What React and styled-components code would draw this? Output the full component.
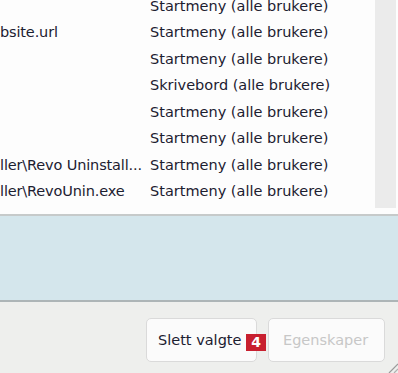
import React from "react";
import styled, { createGlobalStyle } from "styled-components";

const Global = createGlobalStyle`
  html, body { margin: 0; padding: 0; background: #fdfdfd; }
  body { font-family: "DejaVu Sans", Verdana, sans-serif; }
`;

const Window = styled.div`
  position: relative;
  width: 398px;
  height: 373px;
  display: flex;
  flex-direction: column;
  overflow: hidden;
  font-family: "DejaVu Sans", Verdana, sans-serif;
`;

const ListArea = styled.div`
  height: 214px;
  display: flex;
  background: #fdfdfd;
  border-bottom: 2px solid #c6caca;
  flex-shrink: 0;
`;

const Viewport = styled.div`
  flex: 1;
  overflow: hidden;
`;

const Rows = styled.div`
  margin-top: -7.4px;
`;

const Row = styled.div`
  display: grid;
  grid-template-columns: 150px 1fr;
  height: 26.5px;
  line-height: 26.5px;
  font-size: 14.5px;
  color: #1c2030;
  white-space: nowrap;
`;

const Cell = styled.div`
  overflow: hidden;
  letter-spacing: ${(p) => (p.$tight ? "-0.15px" : "0")};
`;

const Scrollbar = styled.div`
  width: 21px;
  height: 208px;
  margin-right: 2px;
  background: #ebebeb;
  flex-shrink: 0;
`;

const InfoArea = styled.div`
  height: 84px;
  background: #d4e6ec;
  border-bottom: 2px solid #adb5b7;
  flex-shrink: 0;
`;

const ButtonBar = styled.div`
  flex: 1;
  background: #eeefed;
  display: flex;
  justify-content: flex-end;
  align-items: flex-start;
  gap: 11px;
  padding: 16px 13px 0 0;
`;

const Button = styled.button`
  position: relative;
  width: ${(p) => p.$w}px;
  height: 44px;
  border: 1px solid #dadada;
  border-radius: 5px;
  background: #fbfbfb;
  font-family: "DejaVu Sans", Verdana, sans-serif;
  font-size: 14.5px;
  color: ${(p) => (p.disabled ? "#c7c7c7" : "#1c2030")};
  padding: 0 0 0 ${(p) => p.$pl}px;
  text-align: left;
  cursor: default;
`;

const Badge = styled.span`
  position: absolute;
  left: 99px;
  top: 15px;
  width: 20px;
  height: 17px;
  background: #c8202f;
  color: #fff;
  font-weight: bold;
  font-size: 14px;
  line-height: 17px;
  text-align: center;
`;

const Grip = styled.svg`
  position: absolute;
  right: 0;
  bottom: 0;
`;

const rows = [
  ["", "Startmeny (alle brukere)"],
  ["bsite.url", "Startmeny (alle brukere)"],
  ["", "Startmeny (alle brukere)"],
  ["", "Skrivebord (alle brukere)"],
  ["", "Startmeny (alle brukere)"],
  ["", "Startmeny (alle brukere)"],
  ["ller\\Revo Uninstall...", "Startmeny (alle brukere)"],
  ["ller\\RevoUnin.exe", "Startmeny (alle brukere)"],
];

export default function App() {
  return (
    <Window>
      <Global />
      <ListArea>
        <Viewport>
          <Rows>
            {rows.map(([a, b], i) => (
              <Row key={i}>
                <Cell $tight>{a}</Cell>
                <Cell>{b}</Cell>
              </Row>
            ))}
          </Rows>
        </Viewport>
        <Scrollbar />
      </ListArea>
      <InfoArea />
      <ButtonBar>
        <Button $w={111} $pl={11}>
          Slett valgte
          <Badge>4</Badge>
        </Button>
        <Button $w={117} $pl={14} disabled>
          Egenskaper
        </Button>
      </ButtonBar>
      <Grip width="10" height="10" viewBox="0 0 10 10">
        <line x1="1" y1="10" x2="10" y2="1" stroke="#9a9a9a" strokeWidth="1.2" />
        <line x1="6" y1="10" x2="10" y2="6" stroke="#b0b0b0" strokeWidth="1.2" />
      </Grip>
    </Window>
  );
}
